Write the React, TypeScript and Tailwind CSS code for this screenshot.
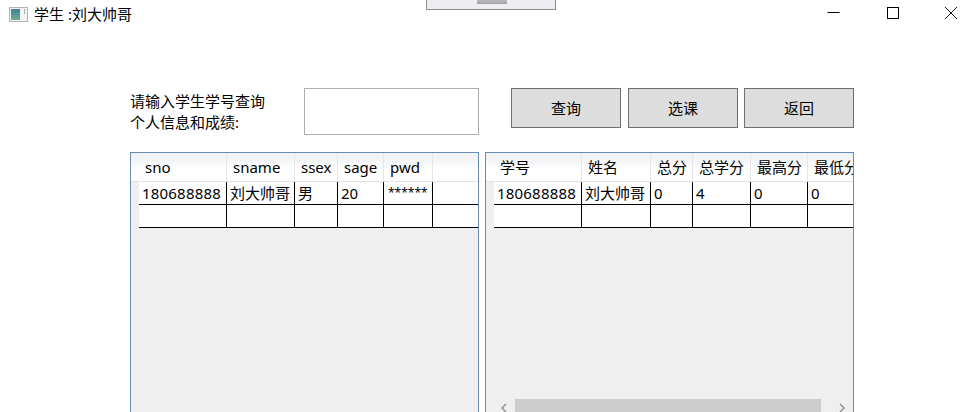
const font = "font-['Noto_Sans','Noto_Sans_CJK_SC',sans-serif]";

type Column = { title: string; width: string };

const studentColumns: Column[] = [
  { title: "sno", width: "w-[88px]" },
  { title: "sname", width: "w-[68px]" },
  { title: "ssex", width: "w-[43px]" },
  { title: "sage", width: "w-[46px]" },
  { title: "pwd", width: "w-[49px]" },
];

const scoreColumns: Column[] = [
  { title: "学号", width: "w-[88px]" },
  { title: "姓名", width: "w-[69px]" },
  { title: "总分", width: "w-[42px]" },
  { title: "总学分", width: "w-[58px]" },
  { title: "最高分", width: "w-[57px]" },
  { title: "最低分", width: "w-[57px]" },
];

function WindowIcon() {
  return (
    <svg width="19" height="15" viewBox="0 0 19 15" className="shrink-0">
      <defs>
        <linearGradient id="pane" x1="0" y1="0" x2="0" y2="1">
          <stop offset="0" stopColor="#3f7f9a" />
          <stop offset="1" stopColor="#6fae8c" />
        </linearGradient>
      </defs>
      <rect x="0.5" y="0.5" width="18" height="14" fill="#f4f4f4" stroke="#b4b4b4" />
      <rect x="2" y="2" width="9" height="11" fill="url(#pane)" />
      <rect x="15" y="2" width="1" height="5" fill="#a8b4b4" />
    </svg>
  );
}

function TitleBar() {
  return (
    <div className="flex h-[28px] items-center">
      <div className="ml-[9px] flex items-center gap-[6px] text-[15px] leading-[28px] text-black">
        <WindowIcon />
        <span>学生 :刘大帅哥</span>
      </div>
      <div className="ml-auto flex items-center">
        <svg width="14" height="14" viewBox="0 0 14 14" className="mr-[46px] mb-[2px]">
          <path d="M1.5 6.5H13.5" stroke="#000" />
        </svg>
        <svg width="14" height="14" viewBox="0 0 14 14" className="mr-[44px] mb-[2px]">
          <rect x="1.5" y="1.5" width="11" height="11" fill="none" stroke="#000" />
        </svg>
        <svg width="14" height="14" viewBox="0 0 14 14" className="mr-[18px] mb-[2px]">
          <path d="M1 1L13 13M13 1L1 13" stroke="#000" strokeWidth="0.9" />
        </svg>
      </div>
    </div>
  );
}

function ActionButton({ label }: { label: string }) {
  return (
    <button className="flex h-[40px] w-[110px] items-center justify-center border border-[#707070] bg-[#dddddd] text-[15px] text-black">
      {label}
    </button>
  );
}

function cellText(value: string) {
  if (value.startsWith("*")) return "pl-[4px] text-[12px]";
  if (/^\d{3,}$/.test(value)) return "pl-[3px] text-[15px] tracking-[0.2px]";
  return "pl-[3px] text-[15px]";
}

function DataGrid({
  columns,
  rows,
  width,
  scrollbar,
}: {
  columns: Column[];
  rows: string[][];
  width: string;
  scrollbar?: boolean;
}) {
  return (
    <div className={`flex h-[265px] shrink-0 flex-col overflow-hidden border border-[#688caf] bg-[#efefef] ${width}`}>
      <div className="flex h-[29px] shrink-0 border-b border-[#e2e2e2] bg-gradient-to-b from-[#f1f2f4] from-20% to-white to-60%">
        <div className="w-[8px] shrink-0" />
        {columns.map((c) => (
          <div
            key={c.title}
            className={`shrink-0 overflow-hidden whitespace-nowrap border-r border-[#e6e6e6] pl-[6px] text-[15px] leading-[28px] text-black ${c.width}`}
          >
            {c.title}
          </div>
        ))}
      </div>
      {rows.map((row, r) => (
        <div key={r} className="flex h-[23px] shrink-0">
          <div className="w-[8px] shrink-0" />
          <div className="flex flex-1 border-b border-black bg-white">
            {columns.map((c, i) => (
              <div
                key={c.title}
                className={`shrink-0 overflow-hidden whitespace-nowrap border-r border-black leading-[22px] text-black ${c.width} ${cellText(row[i])}`}
              >
                {row[i]}
              </div>
            ))}
          </div>
        </div>
      ))}
      {scrollbar && (
        <div className="mt-auto flex h-[17px] shrink-0 items-center">
          <svg width="8" height="10" viewBox="0 0 8 10" className="ml-[14px] shrink-0">
            <path d="M6 1L2 5L6 9" fill="none" stroke="#8c8c8c" strokeWidth="1.4" />
          </svg>
          <div className="ml-[7px] h-full w-[306px] shrink-0 bg-[#cdcdcd]" />
          <svg width="8" height="10" viewBox="0 0 8 10" className="ml-[17px] shrink-0">
            <path d="M2 1L6 5L2 9" fill="none" stroke="#8c8c8c" strokeWidth="1.4" />
          </svg>
        </div>
      )}
    </div>
  );
}

export default function App() {
  return (
    <div className={`relative h-[412px] w-[976px] overflow-hidden bg-white ${font}`}>
      <div className="absolute left-[426px] top-0 h-[10px] w-[130px] border border-t-0 border-[#8c8c8c] bg-[#eeeef2]">
        <div className="ml-[50px] h-[4px] w-[30px] border-b border-[#a0a0a0] bg-[#b4b4b4]" />
      </div>

      <TitleBar />

      <div className="ml-[130px] mt-[60px] flex items-start">
        <div className="w-[174px] pt-[3px] text-[15px] leading-[21px] text-black">
          <div>请输入学生学号查询</div>
          <div>个人信息和成绩:</div>
        </div>
        <input className="h-[47px] w-[175px] border border-[#abadb3] bg-white outline-none" />
        <div className="ml-[32px] flex gap-[7px]">
          <ActionButton label="查询" />
          <ActionButton label="选课" />
          <div className="-ml-px">
            <ActionButton label="返回" />
          </div>
        </div>
      </div>

      <div className="ml-[130px] mt-[17px] flex gap-[6px]">
        <DataGrid
          columns={studentColumns}
          rows={[["180688888", "刘大帅哥", "男", "20", "******"], ["", "", "", "", ""]]}
          width="w-[349px]"
        />
        <DataGrid
          columns={scoreColumns}
          rows={[["180688888", "刘大帅哥", "0", "4", "0", "0"], ["", "", "", "", "", ""]]}
          width="w-[369px]"
          scrollbar
        />
      </div>
    </div>
  );
}
